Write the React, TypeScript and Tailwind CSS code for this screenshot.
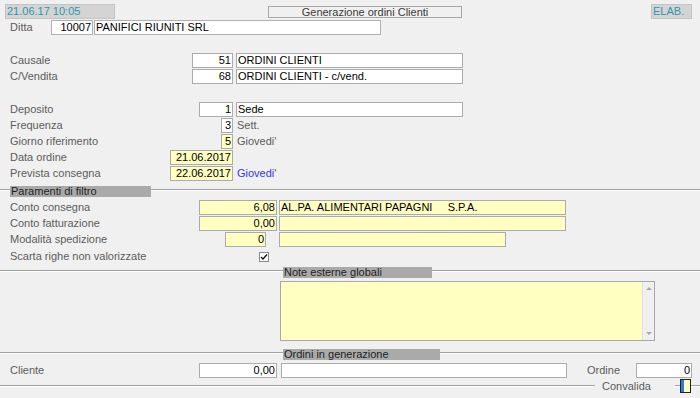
import React from "react";

const F = { fontFamily: '"Liberation Sans", Arial, sans-serif' };

function Box({
  w,
  yellow,
  right,
  children,
  className = "",
}: {
  w: string;
  yellow?: boolean;
  right?: boolean;
  children?: React.ReactNode;
  className?: string;
}) {
  return (
    <div
      className={
        `${w} h-[15px] shrink-0 border border-[#ababab] leading-[13px] text-[11px] text-black whitespace-pre overflow-hidden ` +
        (yellow ? "bg-[#ffffc2] " : "bg-white ") +
        (right ? "text-right pr-[1px] " : "text-left pl-[1px] ") +
        className
      }
    >
      {children}
    </div>
  );
}

function Label({ children, className = "" }: { children: React.ReactNode; className?: string }) {
  return <span className={`text-[11px] text-[#5c5c5c] leading-[15px] ${className}`}>{children}</span>;
}

function Row({ children, className = "" }: { children: React.ReactNode; className?: string }) {
  return <div className={`flex h-[16px] items-start ${className}`}>{children}</div>;
}

function Header({ lead, w, text, className = "" }: { lead: string; w: string; text: string; className?: string }) {
  return (
    <div className={`flex items-start h-[11px] ${className}`}>
      <div className={`${lead} mt-[3px] h-[2px] border-t border-[#a0a0a0] border-b border-b-white`} />
      <div className={`${w} h-[11px] bg-[#aaaaaa] text-[11px] leading-[11px] text-[#1e1e1e] pl-[1px] whitespace-nowrap`}>{text}</div>
      <div className="flex-1 mt-[3px] h-[2px] border-t border-[#a0a0a0] border-b border-b-white" />
    </div>
  );
}

export default function App() {
  return (
    <div style={F} className="w-[700px] h-[398px] bg-[#f0f0f0] overflow-hidden">
      {/* top row */}
      <div className="flex items-start h-[20px] pt-[4px]">
        <div className="ml-[5px] w-[110px] h-[15px] bg-[#d4d4d4] border border-[#c4c4c4] text-[11px] leading-[13px] text-[#2e97a9] pl-[1px]">
          21.06.17 10:05
        </div>
        <div className="ml-[153px] mt-[2px] w-[194px] h-[12px] border border-[#a6a6a6] text-[11px] leading-[10px] text-[#3a3a3a] text-center">
          Generazione ordini Clienti
        </div>
        <div className="ml-[189px] w-[41px] h-[15px] bg-[#d4d4d4] border border-[#c4c4c4] text-[11px] leading-[13px] text-[#2e97a9] pl-[1px]">
          ELAB.
        </div>
      </div>

      {/* Ditta */}
      <div className="flex items-start h-[15px] pl-[10px]">
        <Label className="w-[41px] leading-[15px]">Ditta</Label>
        <Box w="w-[42px]" right className="border-[#b0b0b0] bg-[#f4f4f4]">10007</Box>
        <Box w="w-[287px]" className="ml-[1px] border-[#b0b0b0] bg-[#f4f4f4]">PANIFICI RIUNITI SRL</Box>
      </div>

      {/* Causale group */}
      <div className="mt-[18px] pl-[10px]">
        <Row>
          <div className="w-[223px] flex justify-between">
            <Label>Causale</Label>
            <Box w="w-[41px]" right>51</Box>
          </div>
          <Box w="w-[227px]" className="ml-[3px]">ORDINI CLIENTI</Box>
        </Row>
        <Row>
          <div className="w-[223px] flex justify-between">
            <Label>C/Vendita</Label>
            <Box w="w-[41px]" right>68</Box>
          </div>
          <Box w="w-[227px]" className="ml-[3px]">ORDINI CLIENTI - c/vend.</Box>
        </Row>
      </div>

      {/* Deposito group */}
      <div className="mt-[17px] pl-[10px]">
        <Row>
          <div className="w-[223px] flex justify-between">
            <Label>Deposito</Label>
            <Box w="w-[34px]" right>1</Box>
          </div>
          <Box w="w-[227px]" className="ml-[3px]">Sede</Box>
        </Row>
        <Row>
          <div className="w-[223px] flex justify-between">
            <Label>Frequenza</Label>
            <Box w="w-[12px]" right className="bg-[#f4f4f4]">3</Box>
          </div>
          <Label className="ml-[4px]">Sett.</Label>
        </Row>
        <Row>
          <div className="w-[223px] flex justify-between">
            <Label>Giorno riferimento</Label>
            <Box w="w-[12px]" right yellow>5</Box>
          </div>
          <Label className="ml-[4px]">Giovedi'</Label>
        </Row>
        <Row>
          <div className="w-[223px] flex justify-between">
            <Label>Data ordine</Label>
            <Box w="w-[63px]" right yellow>21.06.2017</Box>
          </div>
        </Row>
        <Row>
          <div className="w-[223px] flex justify-between">
            <Label>Prevista consegna</Label>
            <Box w="w-[63px]" right yellow>22.06.2017</Box>
          </div>
          <span className="ml-[4px] text-[11px] leading-[15px] text-[#3535e8]">Giovedi'</span>
        </Row>
      </div>

      <Header lead="w-[10px]" w="w-[141px]" text="Paramenti di filtro" className="mt-[4px]" />

      {/* filter group */}
      <div className="mt-[3px] pl-[10px]">
        <Row>
          <div className="w-[267px] flex justify-between">
            <Label>Conto consegna</Label>
            <Box w="w-[78px]" right yellow>6,08</Box>
          </div>
          <Box w="w-[287px]" yellow className="ml-[2px]">{"AL.PA. ALIMENTARI PAPAGNI     S.P.A."}</Box>
        </Row>
        <Row>
          <div className="w-[267px] flex justify-between">
            <Label>Conto fatturazione</Label>
            <Box w="w-[78px]" right yellow>0,00</Box>
          </div>
          <Box w="w-[287px]" yellow className="ml-[2px]" />
        </Row>
        <Row>
          <div className="w-[256px] flex justify-between">
            <Label>Modalità spedizione</Label>
            <Box w="w-[41px]" right yellow>0</Box>
          </div>
          <Box w="w-[227px]" yellow className="ml-[13px]" />
        </Row>
        <Row>
          <div className="w-[259px] flex justify-between items-center h-[16px]">
            <Label>Scarta righe non valorizzate</Label>
            <div className="w-[10px] h-[10px] mt-[2px] border border-[#8a8a8a] bg-white flex items-center justify-center">
              <svg width="8" height="8" viewBox="0 0 8 8">
                <path d="M1 4 L3 6 L7 1.5" stroke="#111" strokeWidth="1.3" fill="none" />
              </svg>
            </div>
          </div>
        </Row>
      </div>

      <Header lead="w-[283px]" w="w-[149px]" text="Note esterne globali" className="mt-[3px]" />

      {/* textarea */}
      <div className="mt-[3px] ml-[280px] w-[375px] h-[60px] border border-[#a8a8a8] bg-[#ffffc2] flex">
        <div className="flex-1" />
        <div className="w-[12px] h-full bg-[#f0f0f0] border-l border-[#e0e0e0] flex flex-col items-center justify-between py-[4px]">
          <svg width="6" height="4" viewBox="0 0 6 4"><path d="M0 4 L3 1 L6 4 Z" fill="#a8a8a8" /></svg>
          <svg width="6" height="4" viewBox="0 0 6 4"><path d="M0 0 L3 3 L6 0 Z" fill="#a8a8a8" /></svg>
        </div>
      </div>

      <Header lead="w-[283px]" w="w-[157px]" text="Ordini in generazione" className="mt-[8px]" />

      {/* Cliente row */}
      <div className="mt-[3px] pl-[10px] flex items-start h-[16px]">
        <div className="w-[267px] flex justify-between">
          <Label>Cliente</Label>
          <Box w="w-[78px]" right className="bg-[#f2f2f2]">0,00</Box>
        </div>
        <Box w="w-[286px]" className="ml-[4px] bg-[#f2f2f2]" />
        <Label className="ml-[20px] w-[49px]">Ordine</Label>
        <Box w="w-[56px]" right className="bg-[#f2f2f2]">0</Box>
      </div>

      {/* Convalida row */}
      <div className="flex items-center h-[14px]">
        <div className="w-[595px] h-[2px] border-t border-[#a0a0a0] border-b border-b-white" />
        <span className="ml-[7px] w-[48px] text-[11px] text-[#5c5c5c] leading-[14px]">Convalida</span>
        <div className="ml-[25px] w-[5px] h-[2px] border-t border-[#a0a0a0] border-b border-b-white" />
        <div className="w-[11px] h-[14px] border border-[#222] bg-[#ffffc2] flex">
          <div className="w-[3px] h-full bg-[#2a7be0]" />
        </div>
        <div className="flex-1 h-[2px] border-t border-[#a0a0a0] border-b border-b-white" />
      </div>
    </div>
  );
}
